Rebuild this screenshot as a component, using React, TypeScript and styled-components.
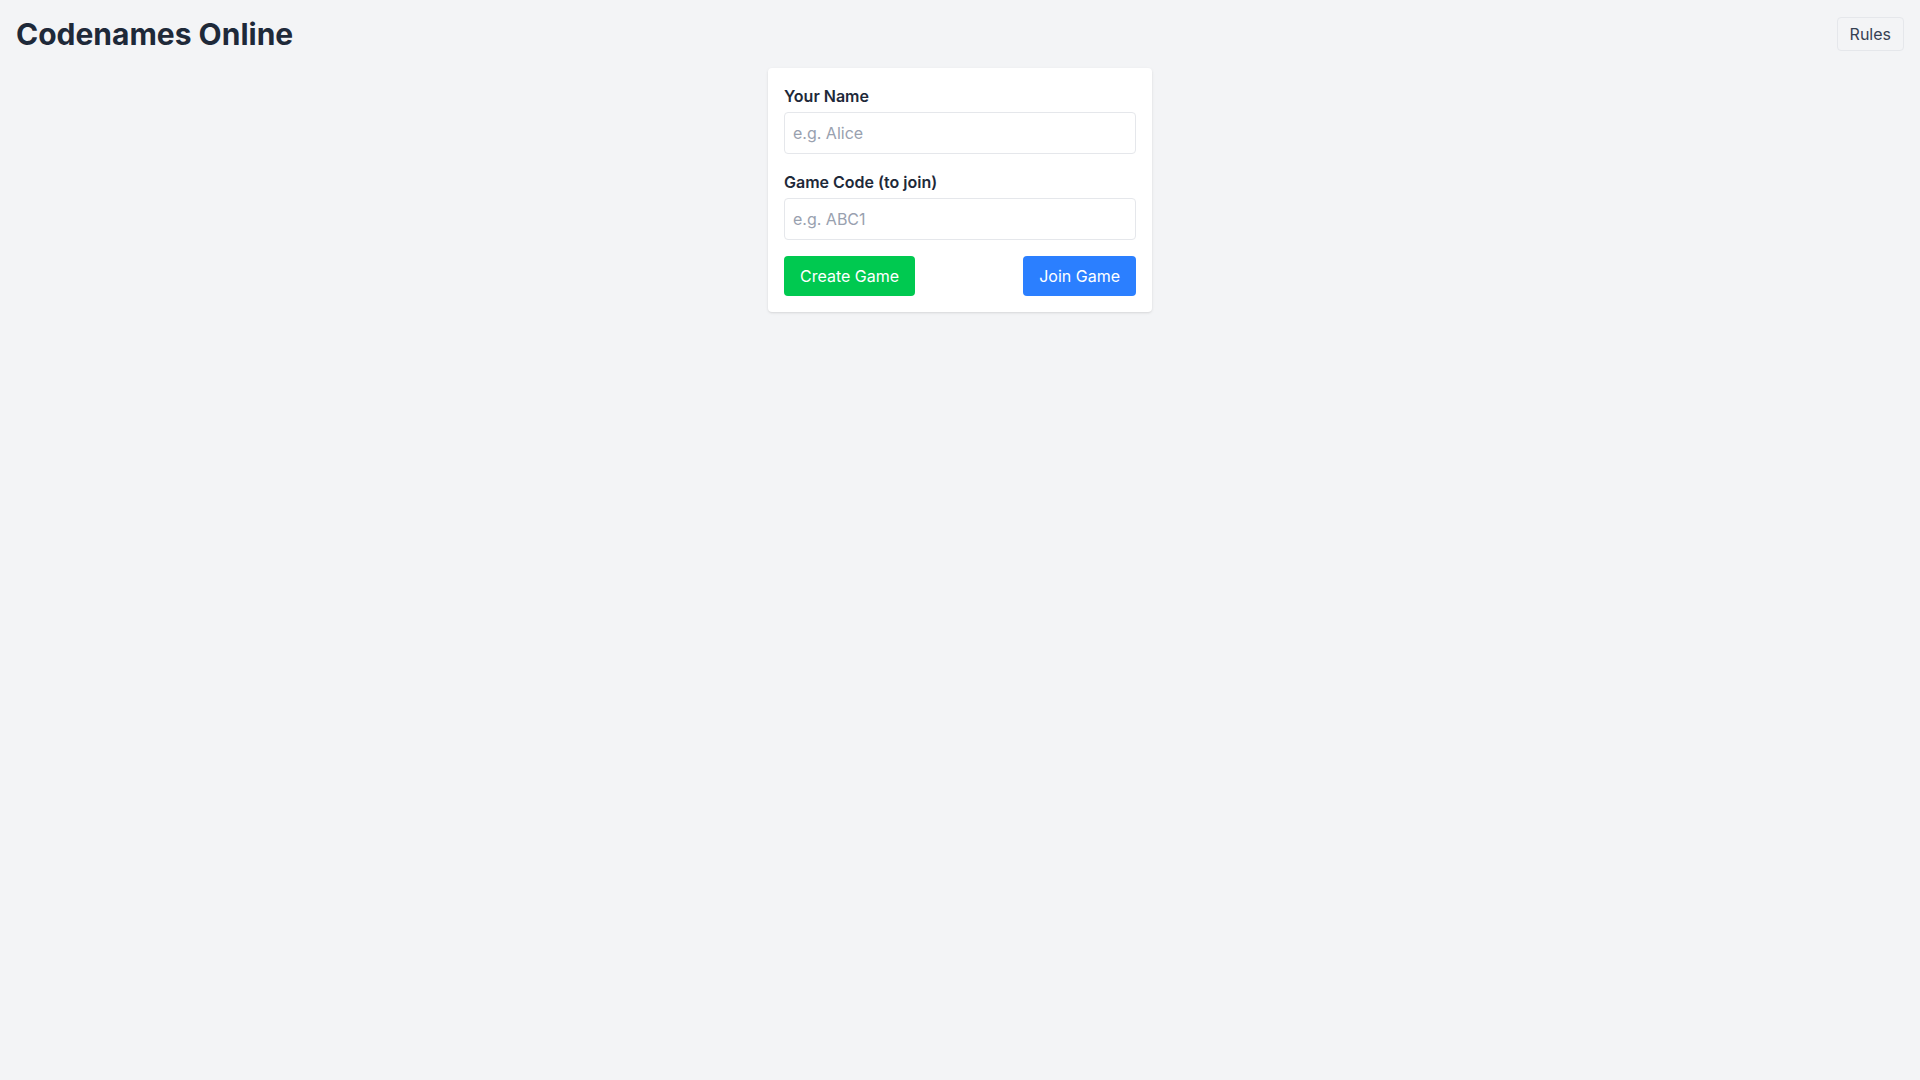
import React from 'react';
import styled, {createGlobalStyle} from 'styled-components';

const GlobalStyle = createGlobalStyle`
  * {
    box-sizing: border-box;
  }
  html, body {
    margin: 0;
    padding: 0;
  }
  body {
    min-height: 100vh;
    background-color: #f3f4f6;
    font-family: Inter, "Noto Sans", "Liberation Sans", sans-serif;
    color: #1e2939;
  }
`

export default function App() {
    return (
        <>
            <GlobalStyle/>
            <Page>
                <Header>
                    <Title>Codenames Online</Title>
                    <RulesButton type="button">Rules</RulesButton>
                </Header>
                <Lobby>
                    <Field>
                        <Label htmlFor="name">Your Name</Label>
                        <Input id="name" placeholder="e.g. Alice"/>
                    </Field>
                    <Field>
                        <Label htmlFor="code">Game Code (to join)</Label>
                        <Input id="code" placeholder="e.g. ABC1"/>
                    </Field>
                    <Actions>
                        <ActionButton type="button" variant="create">Create Game</ActionButton>
                        <ActionButton type="button" variant="join">Join Game</ActionButton>
                    </Actions>
                </Lobby>
            </Page>
        </>
    );
}

const Page = styled.div`
  min-height: 100vh;
  background-color: #f3f4f6;
`
const Header = styled.header`
  display: flex;
  justify-content: space-between;
  align-items: center;
  padding: 16px;
`
const Title = styled.h1`
  margin: 0;
  font-size: 30px;
  line-height: 36px;
  font-weight: 700;
  color: #1e2939;
`
const RulesButton = styled.button`
  padding: 4px 12px;
  font-family: inherit;
  font-size: 16px;
  line-height: 24px;
  color: #364153;
  background-color: #f3f4f6;
  border: 1px solid #e5e7eb;
  border-radius: 4px;
  cursor: pointer;
`
const Lobby = styled.div`
  width: 384px;
  margin: 0 auto;
  padding: 16px;
  display: flex;
  flex-direction: column;
  gap: 16px;
  background-color: #fff;
  border-radius: 4px;
  box-shadow: 0 1px 3px 0 rgba(0, 0, 0, 0.1), 0 1px 2px -1px rgba(0, 0, 0, 0.1);
`
const Field = styled.div`
  display: flex;
  flex-direction: column;
  gap: 4px;
`
const Label = styled.label`
  font-size: 16px;
  line-height: 24px;
  font-weight: 600;
  color: #1e2939;
`
const Input = styled.input`
  width: 100%;
  padding: 8px;
  font-family: inherit;
  font-size: 16px;
  line-height: 24px;
  color: #1e2939;
  border: 1px solid #e5e7eb;
  border-radius: 4px;
  outline: none;

  &::placeholder {
    color: #99a1af;
  }
`
const Actions = styled.div`
  display: flex;
  justify-content: space-between;
`
const ActionButton = styled.button<{ variant: 'create' | 'join' }>`
  padding: 8px 16px;
  font-family: inherit;
  font-size: 16px;
  line-height: 24px;
  color: #fff;
  border: none;
  border-radius: 4px;
  cursor: pointer;
  background-color: ${props => props.variant === 'create' ? '#00c950' : '#2b7fff'};
`
